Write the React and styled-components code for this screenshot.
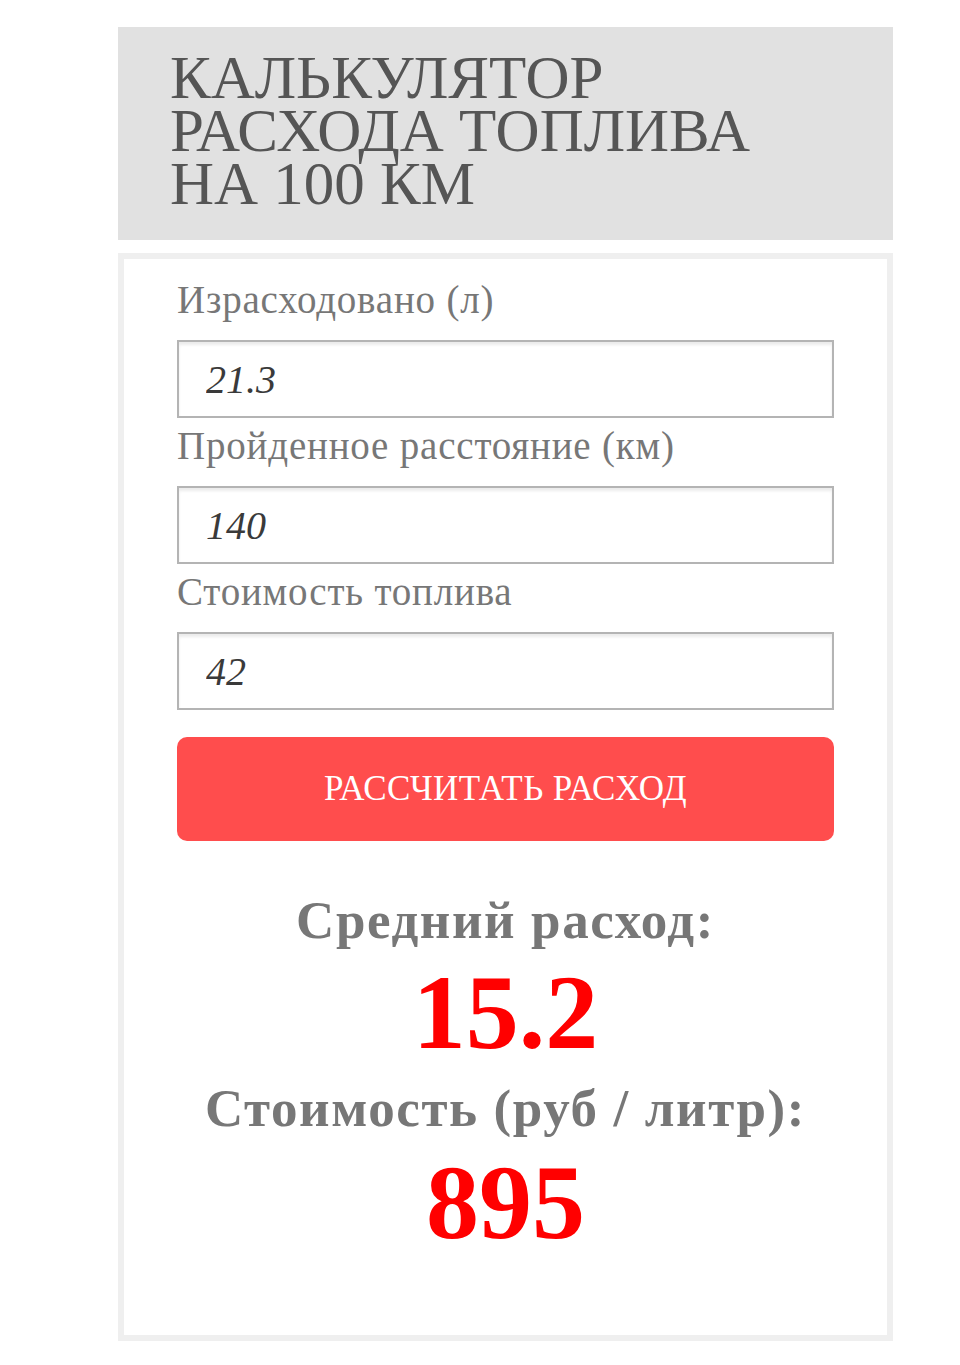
import React, { useState } from 'react';
import styled, { createGlobalStyle } from 'styled-components';

const GlobalStyle = createGlobalStyle`
    body {
        margin: 0;
        background: #fff;
        font-family: "Liberation Serif", "Times New Roman", serif;
    }
`;

const App = () => {
    const [liters, setLiters] = useState('21.3');
    const [distance, setDistance] = useState('140');
    const [price, setPrice] = useState('42');
    const [result, setResult] = useState({ avg: '15.2', cost: '895' });

    const calculate = (e) => {
        e.preventDefault();
        const l = parseFloat(liters);
        const d = parseFloat(distance);
        const p = parseFloat(price);
        if (!l || !d) return;
        setResult({
            avg: (l / d * 100).toFixed(1),
            cost: Math.round(l * p).toString()
        });
    }

    return (
        <>
            <GlobalStyle />
            <Wrapper>
                <Header>
                    <Title>КАЛЬКУЛЯТОР<br />РАСХОДА ТОПЛИВА<br />НА 100 КМ</Title>
                </Header>
                <Card onSubmit={calculate}>
                    <Label>Израсходовано (л)</Label>
                    <Input value={liters} onChange={(e) => setLiters(e.target.value)} />
                    <Label>Пройденное расстояние (км)</Label>
                    <Input value={distance} onChange={(e) => setDistance(e.target.value)} />
                    <Label>Стоимость топлива</Label>
                    <Input value={price} onChange={(e) => setPrice(e.target.value)} />
                    <Button type="submit">РАССЧИТАТЬ РАСХОД</Button>

                    <Result>
                        <ResultLabel>Средний расход:</ResultLabel>
                        <ResultValue $gap="12px">{result.avg}</ResultValue>
                        <ResultLabel $gap="14px">Стоимость (руб / литр):</ResultLabel>
                        <ResultValue $gap="14px">{result.cost}</ResultValue>
                    </Result>
                </Card>
            </Wrapper>
        </>
    );
}

const Wrapper = styled.div`
    width: 775px;
    margin: 27px 0 0 118px;
    display: flex;
    flex-direction: column;
    gap: 13px;
    padding-bottom: 22px;
`;

const Header = styled.header`
    background: #e1e1e1;
    padding: 24px 52px 30px;
`;

const Title = styled.h1`
    margin: 0;
    font-size: 61px;
    line-height: 53px;
    font-weight: normal;
    color: #555;
`;

const Card = styled.form`
    border: 6px solid #efefef;
    background: #fff;
    padding: 20px 53px 80px;
    display: flex;
    flex-direction: column;
`;

const Label = styled.label`
    font-size: 39px;
    line-height: 41px;
    letter-spacing: 0.8px;
    color: #777;
    margin-bottom: 20px;
`;

const Input = styled.input`
    height: 78px;
    box-sizing: border-box;
    border: 2px solid #b4b4b4;
    box-shadow: inset 0 3px 3px rgba(0,0,0,.08);
    padding: 0 27px;
    margin-bottom: 7px;
    font-family: "Liberation Serif", serif;
    font-style: italic;
    font-size: 40px;
    color: #3a3a3a;
    outline: none;
    background: #fff;
`;

const Button = styled.button`
    margin-top: 20px;
    height: 104px;
    border: none;
    border-radius: 10px;
    background: #ff4d4d;
    color: #fff;
    font-family: "Liberation Serif", serif;
    font-size: 35px;
    letter-spacing: 0.4px;
    cursor: pointer;
`;

const Result = styled.div`
    margin-top: 50px;
    display: flex;
    flex-direction: column;
    align-items: center;
    text-align: center;
`;

const ResultLabel = styled.div`
    margin-top: ${props => props.$gap || 0};
    font-size: 53px;
    line-height: 58px;
    letter-spacing: 1.6px;
    font-weight: bold;
    color: #777;
`;

const ResultValue = styled.div`
    margin-top: ${props => props.$gap || 0};
    font-size: 106px;
    line-height: 104px;
    font-weight: bold;
    color: #ff0000;
`;

export default App;
